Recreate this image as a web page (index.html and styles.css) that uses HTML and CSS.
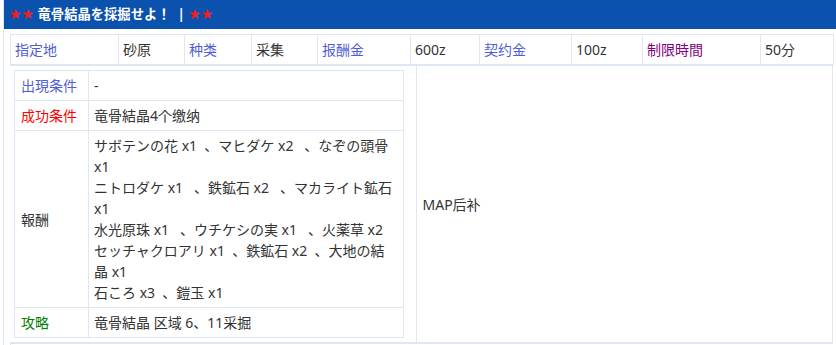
FILE: index.html
```html
<!DOCTYPE html>
<html lang="ja">
<head>
<meta charset="utf-8">
<title>竜骨結晶を採掘せよ！</title>
<link rel="stylesheet" href="styles.css">
</head>
<body>
<div class="panel">
  <div class="title"><span class="star">★★</span> 竜骨結晶を採掘せよ！&nbsp;&nbsp;|&nbsp;<span class="star">★★</span></div>
  <table class="info">
    <colgroup>
      <col class="c1"><col class="c2"><col class="c3"><col class="c4"><col class="c5">
      <col class="c6"><col class="c7"><col class="c8"><col class="c9"><col class="c10">
    </colgroup>
    <tr>
      <td class="k-blue">指定地</td><td>砂原</td>
      <td class="k-blue">种类</td><td>采集</td>
      <td class="k-blue">报酬金</td><td>600z</td>
      <td class="k-blue">契约金</td><td>100z</td>
      <td class="k-purple">制限時間</td><td>50分</td>
    </tr>
  </table>
  <table class="detail">
    <tr>
      <td class="left">
        <table class="sub">
          <tr><td class="lab k-blue">出現条件</td><td>-</td></tr>
          <tr><td class="lab k-red">成功条件</td><td>竜骨結晶4个缴纳</td></tr>
          <tr><td class="lab">報酬</td><td>サボテンの花 x1&nbsp; 、マヒダケ x2&nbsp;&nbsp; 、なぞの頭骨 x1<br>ニトロダケ x1&nbsp;&nbsp; 、鉄鉱石 x2&nbsp;&nbsp; 、マカライト鉱石 x1<br>水光原珠 x1&nbsp;&nbsp; 、ウチケシの実 x1&nbsp;&nbsp; 、火薬草 x2<br>セッチャクロアリ x1&nbsp; 、鉄鉱石 x2&nbsp; 、大地の結晶 x1<br>石ころ x3&nbsp; 、鎧玉 x1</td></tr>
          <tr><td class="lab k-green">攻略</td><td>竜骨結晶 区域 6、11采掘</td></tr>
        </table>
      </td>
      <td class="map">MAP后补</td>
    </tr>
  </table>
  <div class="next"></div>
</div>
</body>
</html>
```
FILE: styles.css
```css
html, body {
  margin: 0;
  padding: 0;
  background: #ffffff;
}
body {
  font-family: "Noto Sans", "Noto Sans CJK SC", "Noto Sans CJK JP", sans-serif;
  font-size: 14px;
  color: #333333;
}
.panel {
  margin-left: 3px;
  border-left: 1px solid #dde7f1;
}
.title {
  height: 29px;
  line-height: 29px;
  background: #0b51ae;
  color: #ffffff;
  font-weight: bold;
  font-size: 13.3px;
  padding-left: 5px;
  white-space: nowrap;
}
.star {
  color: #ff1a1a;
  font-family: "DejaVu Sans", sans-serif;
  font-size: 14px;
  font-weight: normal;
}
table {
  border-collapse: collapse;
}
td {
  box-sizing: border-box;
  padding: 4px 4px;
  line-height: 21px;
  vertical-align: middle;
}
.info {
  table-layout: fixed;
  width: 823px;
  margin: 5px 0 0 6px;
  border: 1px solid #dfe8f2;
}
.info td {
  border: 1px solid #dfe8f2;
  white-space: nowrap;
}
.c1 { width: 108px; }
.c2 { width: 66px; }
.c3 { width: 67px; }
.c4 { width: 66px; }
.c5 { width: 93px; }
.c6 { width: 69px; }
.c7 { width: 92px; }
.c8 { width: 71px; }
.c9 { width: 118px; }
.c10 { width: 73px; }
.detail {
  table-layout: fixed;
  width: 823px;
  margin-left: 6px;
  border-top: 1px solid #dfe8f2;
  border-bottom: 2px solid #dfe8f2;
  border-right: 1px solid #dfe8f2;
}
.detail > tbody > tr > td.left {
  width: 406px;
  padding: 4px 12px 4px 4px;
}
.detail > tbody > tr > td.map {
  border-left: 1px solid #dfe8f2;
  padding: 4px 6px;
}
.sub {
  width: 390px;
  table-layout: fixed;
  border: 1px solid #dfe8f2;
}
.sub td {
  border: 1px solid #dfe8f2;
  padding: 4px 5px;
}
.sub td.lab {
  width: 74px;
  padding: 4px 6px;
}
.next {
  margin-left: 6px;
  height: 4px;
  border-left: 1px solid #dfe8f2;
}
.k-blue { color: #4f5ed6; }
.k-purple { color: #800080; }
.k-red { color: #ff0000; }
.k-green { color: #008000; }
```
